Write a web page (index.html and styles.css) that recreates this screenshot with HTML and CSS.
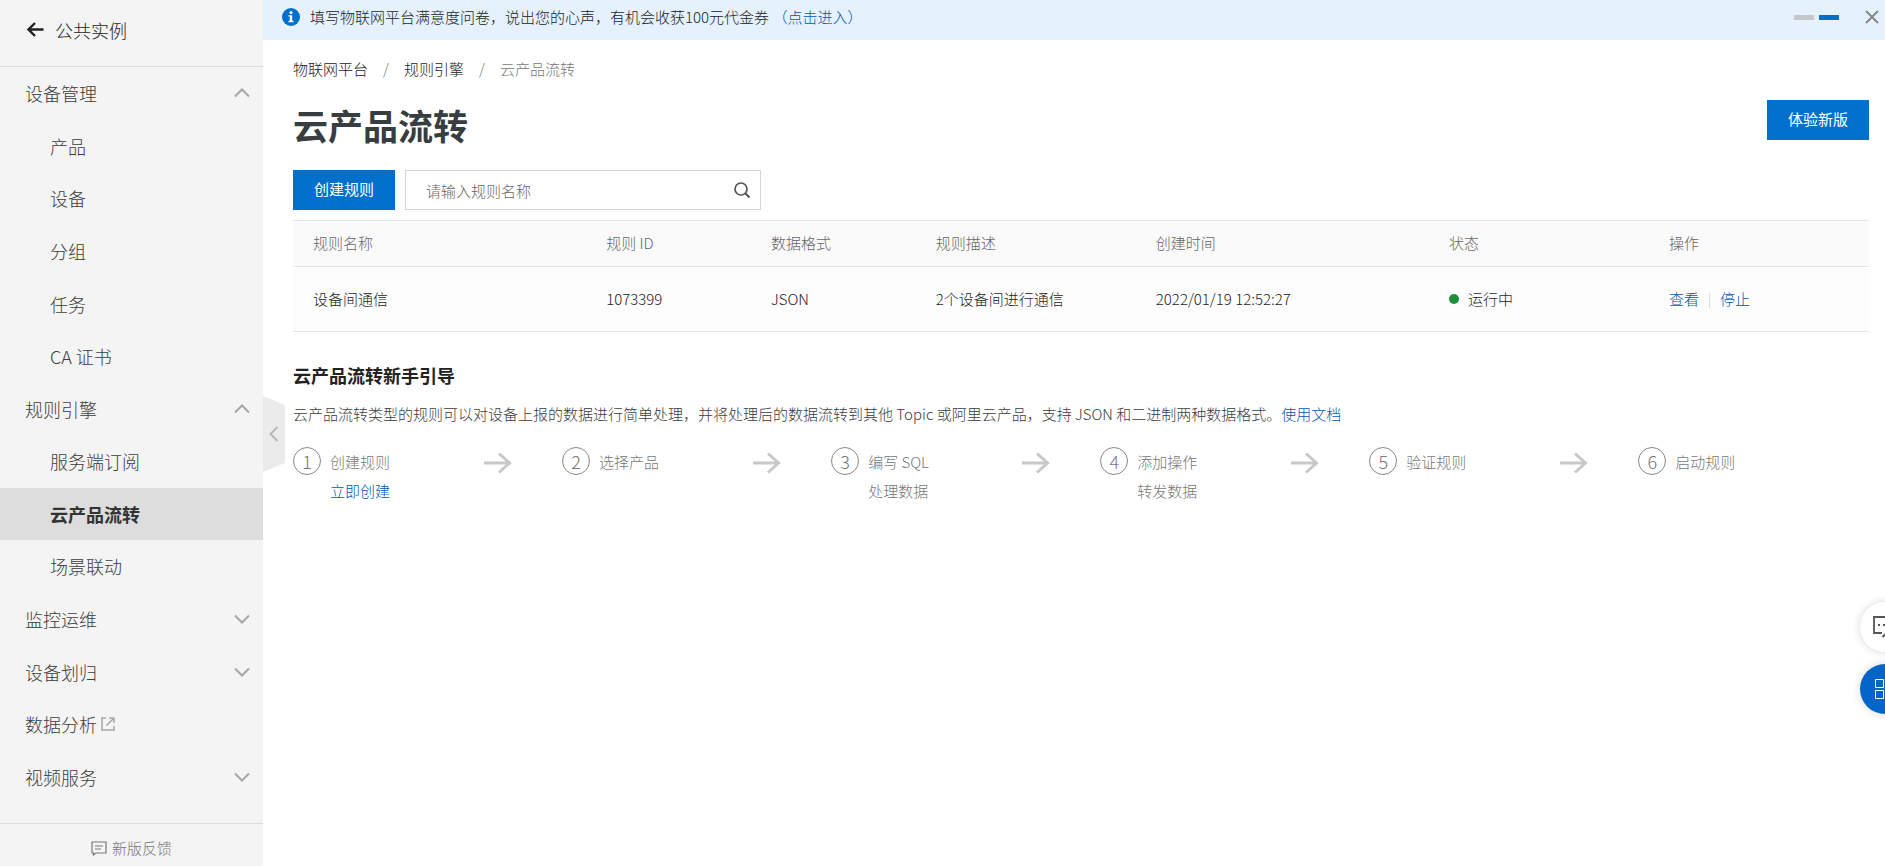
FILE: index.html
```html
<!DOCTYPE html>
<html lang="zh-CN">
<head>
<meta charset="utf-8">
<meta name="viewport" content="width=device-width, initial-scale=1">
<title>云产品流转</title>
<link rel="stylesheet" href="styles.css">
</head>
<body>
<svg class="sprite" aria-hidden="true">
  <symbol id="chevron" viewBox="0 0 16 10"><path d="M1 1.500l7 7 7-7" fill="none" stroke="currentColor" stroke-width="2"/></symbol>
  <symbol id="chevron-up" viewBox="0 0 16 10"><path d="M1 8.500l7-7 7 7" fill="none" stroke="currentColor" stroke-width="2"/></symbol>
  <symbol id="arrow" viewBox="0 0 28 22"><path d="M0 11h25M15 1.500l10.500 9.500L15 20.500" fill="none" stroke="currentColor" stroke-width="3"/></symbol>
</svg>
<div class="layout">
  <aside class="sidebar">
    <a class="back" href="#">
      <svg width="17" height="15" viewBox="0 0 17 15" aria-hidden="true"><path d="M16.500 7.500H2M8 1L1.500 7.500 8 14" fill="none" stroke="currentColor" stroke-width="2.400"/></svg>
      <span>公共实例</span>
    </a>
    <nav class="menu">
      <button class="item group" type="button">设备管理<svg class="chev" aria-hidden="true"><use href="#chevron-up"/></svg></button>
      <a class="item sub" href="#">产品</a>
      <a class="item sub" href="#">设备</a>
      <a class="item sub" href="#">分组</a>
      <a class="item sub" href="#">任务</a>
      <a class="item sub" href="#">CA 证书</a>
      <button class="item group" type="button">规则引擎<svg class="chev" aria-hidden="true"><use href="#chevron-up"/></svg></button>
      <a class="item sub" href="#">服务端订阅</a>
      <a class="item sub current" href="#" aria-current="page">云产品流转</a>
      <a class="item sub" href="#">场景联动</a>
      <button class="item group" type="button">监控运维<svg class="chev" aria-hidden="true"><use href="#chevron"/></svg></button>
      <button class="item group" type="button">设备划归<svg class="chev" aria-hidden="true"><use href="#chevron"/></svg></button>
      <a class="item" href="#">数据分析<svg class="external" viewBox="0 0 14 14" aria-hidden="true"><path d="M5 1H1v12h12V9M5.500 8.500L12 2M8 1h5v5" fill="none" stroke="currentColor" stroke-width="1.500"/></svg></a>
      <button class="item group" type="button">视频服务<svg class="chev" aria-hidden="true"><use href="#chevron"/></svg></button>
    </nav>
    <a class="feedback" href="#">
      <svg width="16" height="15" viewBox="0 0 16 15" aria-hidden="true"><path d="M1 1h14v11H5l-2.500 2V12H1zM4 5h8M4 8h6" fill="none" stroke="currentColor" stroke-width="1.200"/></svg>
      <span>新版反馈</span>
    </a>
    <button class="collapse" type="button" aria-label="收起菜单">
      <svg width="10" height="16" viewBox="0 0 10 16" aria-hidden="true"><path d="M8.500 1L1.500 8l7 7" fill="none" stroke="currentColor" stroke-width="2"/></svg>
    </button>
  </aside>
  <div class="page">
    <div class="notice">
      <svg width="18" height="18" viewBox="0 0 18 18" aria-hidden="true"><circle cx="9" cy="9" r="9" fill="#0070cc"/><circle cx="9" cy="4.500" r="1.500" fill="#fff"/><path d="M6.500 7.200h3.700v5.600h1.300v1.400h-5v-1.400h1.300V8.600H6.500z" fill="#fff"/></svg>
      <p class="notice-text">填写物联网平台满意度问卷，说出您的心声，有机会收获100元代金券 <a href="#">（点击进入）</a></p>
      <div class="dots">
        <button class="dot" type="button" aria-label="第一条"></button>
        <button class="dot on" type="button" aria-label="第二条"></button>
      </div>
      <button class="close" type="button" aria-label="关闭">
        <svg width="14" height="14" viewBox="0 0 14 14" aria-hidden="true"><path d="M1 1l12 12M13 1L1 13" fill="none" stroke="currentColor" stroke-width="2"/></svg>
      </button>
    </div>
    <main class="content">
      <nav class="crumbs" aria-label="路径">
        <a href="#">物联网平台</a><span class="slash">/</span><a href="#">规则引擎</a><span class="slash">/</span><span class="here">云产品流转</span>
      </nav>
      <header class="title-row">
        <h1>云产品流转</h1>
        <button class="btn" type="button">体验新版</button>
      </header>
      <div class="toolbar">
        <button class="btn" type="button">创建规则</button>
        <form class="search" role="search">
          <input type="text" placeholder="请输入规则名称" aria-label="规则名称">
          <button type="button" aria-label="搜索"><svg width="16" height="16" viewBox="0 0 16 16" aria-hidden="true"><path d="M11.500 11.500l4 4" stroke="currentColor" stroke-width="2"/><circle cx="7" cy="7" r="6" fill="none" stroke="currentColor" stroke-width="1.700"/></svg></button>
        </form>
      </div>
      <table class="rules">
        <colgroup><col class="wide"><col class="narrow"><col class="narrow"><col class="mid"><col class="wide"><col class="mid"><col class="mid"></colgroup>
        <thead>
          <tr><th>规则名称</th><th>规则 ID</th><th>数据格式</th><th>规则描述</th><th>创建时间</th><th>状态</th><th>操作</th></tr>
        </thead>
        <tbody>
          <tr><td>设备间通信</td><td>1073399</td><td>JSON</td><td>2个设备间进行通信</td><td>2022/01/19 12:52:27</td><td><span class="status">运行中</span></td><td><span class="actions"><a href="#">查看</a><a href="#">停止</a></span></td></tr>
        </tbody>
      </table>
      <section class="guide">
        <h2>云产品流转新手引导</h2>
        <p class="intro">云产品流转类型的规则可以对设备上报的数据进行简单处理，并将处理后的数据流转到其他 Topic 或阿里云产品，支持 JSON 和二进制两种数据格式。<a href="#">使用文档</a></p>
        <ol class="steps">
          <li><span class="num">1</span><div>创建规则<br><a href="#">立即创建</a></div><svg class="arrow" aria-hidden="true"><use href="#arrow"/></svg></li>
          <li><span class="num">2</span><div>选择产品</div><svg class="arrow" aria-hidden="true"><use href="#arrow"/></svg></li>
          <li><span class="num">3</span><div>编写 SQL<br>处理数据</div><svg class="arrow" aria-hidden="true"><use href="#arrow"/></svg></li>
          <li><span class="num">4</span><div>添加操作<br>转发数据</div><svg class="arrow" aria-hidden="true"><use href="#arrow"/></svg></li>
          <li><span class="num">5</span><div>验证规则</div><svg class="arrow" aria-hidden="true"><use href="#arrow"/></svg></li>
          <li><span class="num">6</span><div>启动规则</div></li>
        </ol>
      </section>
    </main>
  </div>
</div>
<div class="floats">
  <button class="float" type="button" aria-label="咨询">
    <svg width="24" height="22" viewBox="0 0 24 22" aria-hidden="true"><path d="M9 17H1V1h22v16h-7M9.500 21l4-4" fill="none" stroke="currentColor" stroke-width="1.800"/><path d="M5 9h2M10 9h2M15 9h2" stroke="currentColor" stroke-width="2"/></svg>
  </button>
  <button class="float primary" type="button" aria-label="应用">
    <svg width="20" height="20" viewBox="0 0 20 20" aria-hidden="true"><path d="M.5.5h8v8h-8zM11.500.5h8v8h-8zM.5 11.500h8v8h-8zM11.500 11.500h8v8h-8z" fill="none" stroke="currentColor"/></svg>
  </button>
</div>
</body>
</html>
```
FILE: styles.css
```css
* {
  box-sizing: border-box;
}

body {
  margin: 0;
  background: #fff;
  color: #222;
  font: 300 15px/24px "Noto Sans CJK SC", "Noto Sans", sans-serif;
}

a {
  color: #0058b0;
  text-decoration: none;
}

button {
  padding: 0;
  border: 0;
  background: none;
  color: inherit;
  font: inherit;
  cursor: pointer;
}

svg {
  flex: none;
}

.sprite {
  position: absolute;
  width: 0;
  height: 0;
}

.layout {
  display: flex;
  min-height: 100vh;
}

/* Sidebar */
.sidebar {
  position: relative;
  display: flex;
  flex: none;
  flex-direction: column;
  width: 263px;
  background: #f4f4f4;
  font-size: 18px;
}

.back {
  display: flex;
  align-items: center;
  gap: 11px;
  height: 67px;
  padding: 0 27px 7px;
  border-bottom: 1px solid #dcdcdc;
  color: #222;
}

.menu {
  display: grid;
  flex: 1;
  grid-auto-rows: 1fr;
  padding-bottom: 20px;
}

.item {
  display: flex;
  align-items: center;
  min-height: 48px;
  padding: 0 13px 0 25px;
  color: #3c3c3c;
  text-align: left;
}

.group {
  justify-content: space-between;
}

.sub {
  padding-left: 50px;
}

.current {
  background: #ddd;
  color: #333;
  font-weight: 700;
}

.chev {
  width: 16px;
  height: 10px;
  color: #a6a6a6;
}

.external {
  width: 14px;
  height: 14px;
  margin-left: 4px;
  color: #a6a6a6;
}

.feedback {
  display: flex;
  align-items: center;
  justify-content: center;
  gap: 5px;
  height: 43px;
  padding-top: 6px;
  border-top: 1px solid #dcdcdc;
  color: #777;
  font-size: 15px;
}

.collapse {
  position: absolute;
  top: 396px;
  left: 100%;
  display: flex;
  align-items: center;
  justify-content: center;
  width: 22px;
  height: 76px;
  background: #ebebeb;
  clip-path: polygon(0 0, 100% 12%, 100% 88%, 0 100%);
  color: #b8b8b8;
}

/* Notice */
.page {
  flex: 1;
  min-width: 0;
}

.notice {
  display: flex;
  align-items: center;
  height: 40px;
  padding: 0 6px 6px 19px;
  background: #e5f2fd;
}

.notice-text {
  flex: 1;
  margin: 0 10px;
}

.dots {
  display: flex;
  gap: 5px;
}

.dot {
  width: 20px;
  height: 5px;
  background: #c4c8cb;
}

.dot.on {
  background: #0070cc;
}

.close {
  display: flex;
  margin-left: 26px;
  color: #888;
}

/* Content */
.content {
  padding: 17px 16px 30px 30px;
}

.crumbs {
  display: flex;
}

.crumbs a {
  color: #222;
}

.slash {
  margin: 0 15px;
  color: #777;
}

.here {
  color: #777;
}

.title-row {
  display: flex;
  align-items: flex-start;
  justify-content: space-between;
  padding: 19px 0 20px;
}

h1 {
  margin: 0;
  color: #373d41;
  font-size: 35px;
  font-weight: 700;
  line-height: 50px;
}

.btn {
  height: 40px;
  padding: 0 21px 2px;
  background: #0070cc;
  color: #fff;
  font-weight: 400;
}

.toolbar {
  display: flex;
  gap: 10px;
  margin-bottom: 10px;
}

.search {
  display: flex;
  align-items: center;
  width: 356px;
  height: 40px;
  border: 1px solid #d5d5d5;
}

.search input {
  flex: 1;
  min-width: 0;
  height: 38px;
  padding: 0 20px;
  border: 0;
  background: none;
  color: #222;
  font: inherit;
  outline: 0;
}

.search input::placeholder {
  color: #666;
  opacity: 1;
}

.search button {
  display: flex;
  margin-right: 10px;
  color: #555;
}

.rules {
  width: 100%;
  border-collapse: collapse;
  border-top: 1px solid #e5e5e5;
  table-layout: fixed;
}

.wide {
  width: 18.6%;
}

.narrow {
  width: 10.46%;
}

.mid {
  width: 13.96%;
}

.rules th,
.rules td {
  padding: 0 0 0 20px;
  border-bottom: 1px solid #e5e5e5;
  text-align: left;
}

.rules th {
  height: 46px;
  padding-bottom: 2px;
  background: #fafafa;
  color: #666;
  font-weight: 300;
}

.rules td {
  height: 65px;
  background: #fdfdfd;
}

.status {
  display: flex;
  align-items: center;
  gap: 9px;
}

.status::before {
  width: 10px;
  height: 10px;
  border-radius: 50%;
  background: #1e8e3e;
  content: "";
}

.actions {
  display: flex;
  align-items: center;
}

.actions a + a::before {
  display: inline-block;
  height: 15px;
  margin: 0 10px;
  border-left: 1px solid #ddd;
  content: "";
  vertical-align: middle;
}

/* Guide */
.guide {
  padding-top: 31px;
}

h2 {
  margin: 0 0 15px;
  font-size: 18px;
  font-weight: 700;
  line-height: 24px;
}

.intro {
  margin: 0 0 21px;
  color: #3c3c3c;
}

.steps {
  display: grid;
  grid-template-columns: repeat(5, 7fr) 6fr;
  margin: 0;
  padding: 0;
  color: #777;
  line-height: 29px;
  list-style: none;
}

.steps li {
  display: flex;
  align-items: flex-start;
}

.num {
  width: 28px;
  height: 28px;
  margin-right: 9px;
  border: 1px solid #888;
  border-radius: 50%;
  font-size: 18px;
  line-height: 26px;
  text-align: center;
}

.arrow {
  width: 28px;
  height: 22px;
  margin: 5px 50px 0 auto;
  color: #c8c8c8;
}

/* Floating shortcuts, half tucked behind the window edge */
.floats {
  position: fixed;
  right: -25px;
  bottom: 152px;
  display: grid;
  gap: 12px;
}

.float {
  display: grid;
  place-items: center;
  width: 50px;
  height: 50px;
  border-radius: 50%;
  background: #fff;
  box-shadow: 0 0 8px rgba(0, 0, 0, 0.16);
  color: #555;
}

.primary {
  background: #0064c8;
  color: #fff;
}
```
